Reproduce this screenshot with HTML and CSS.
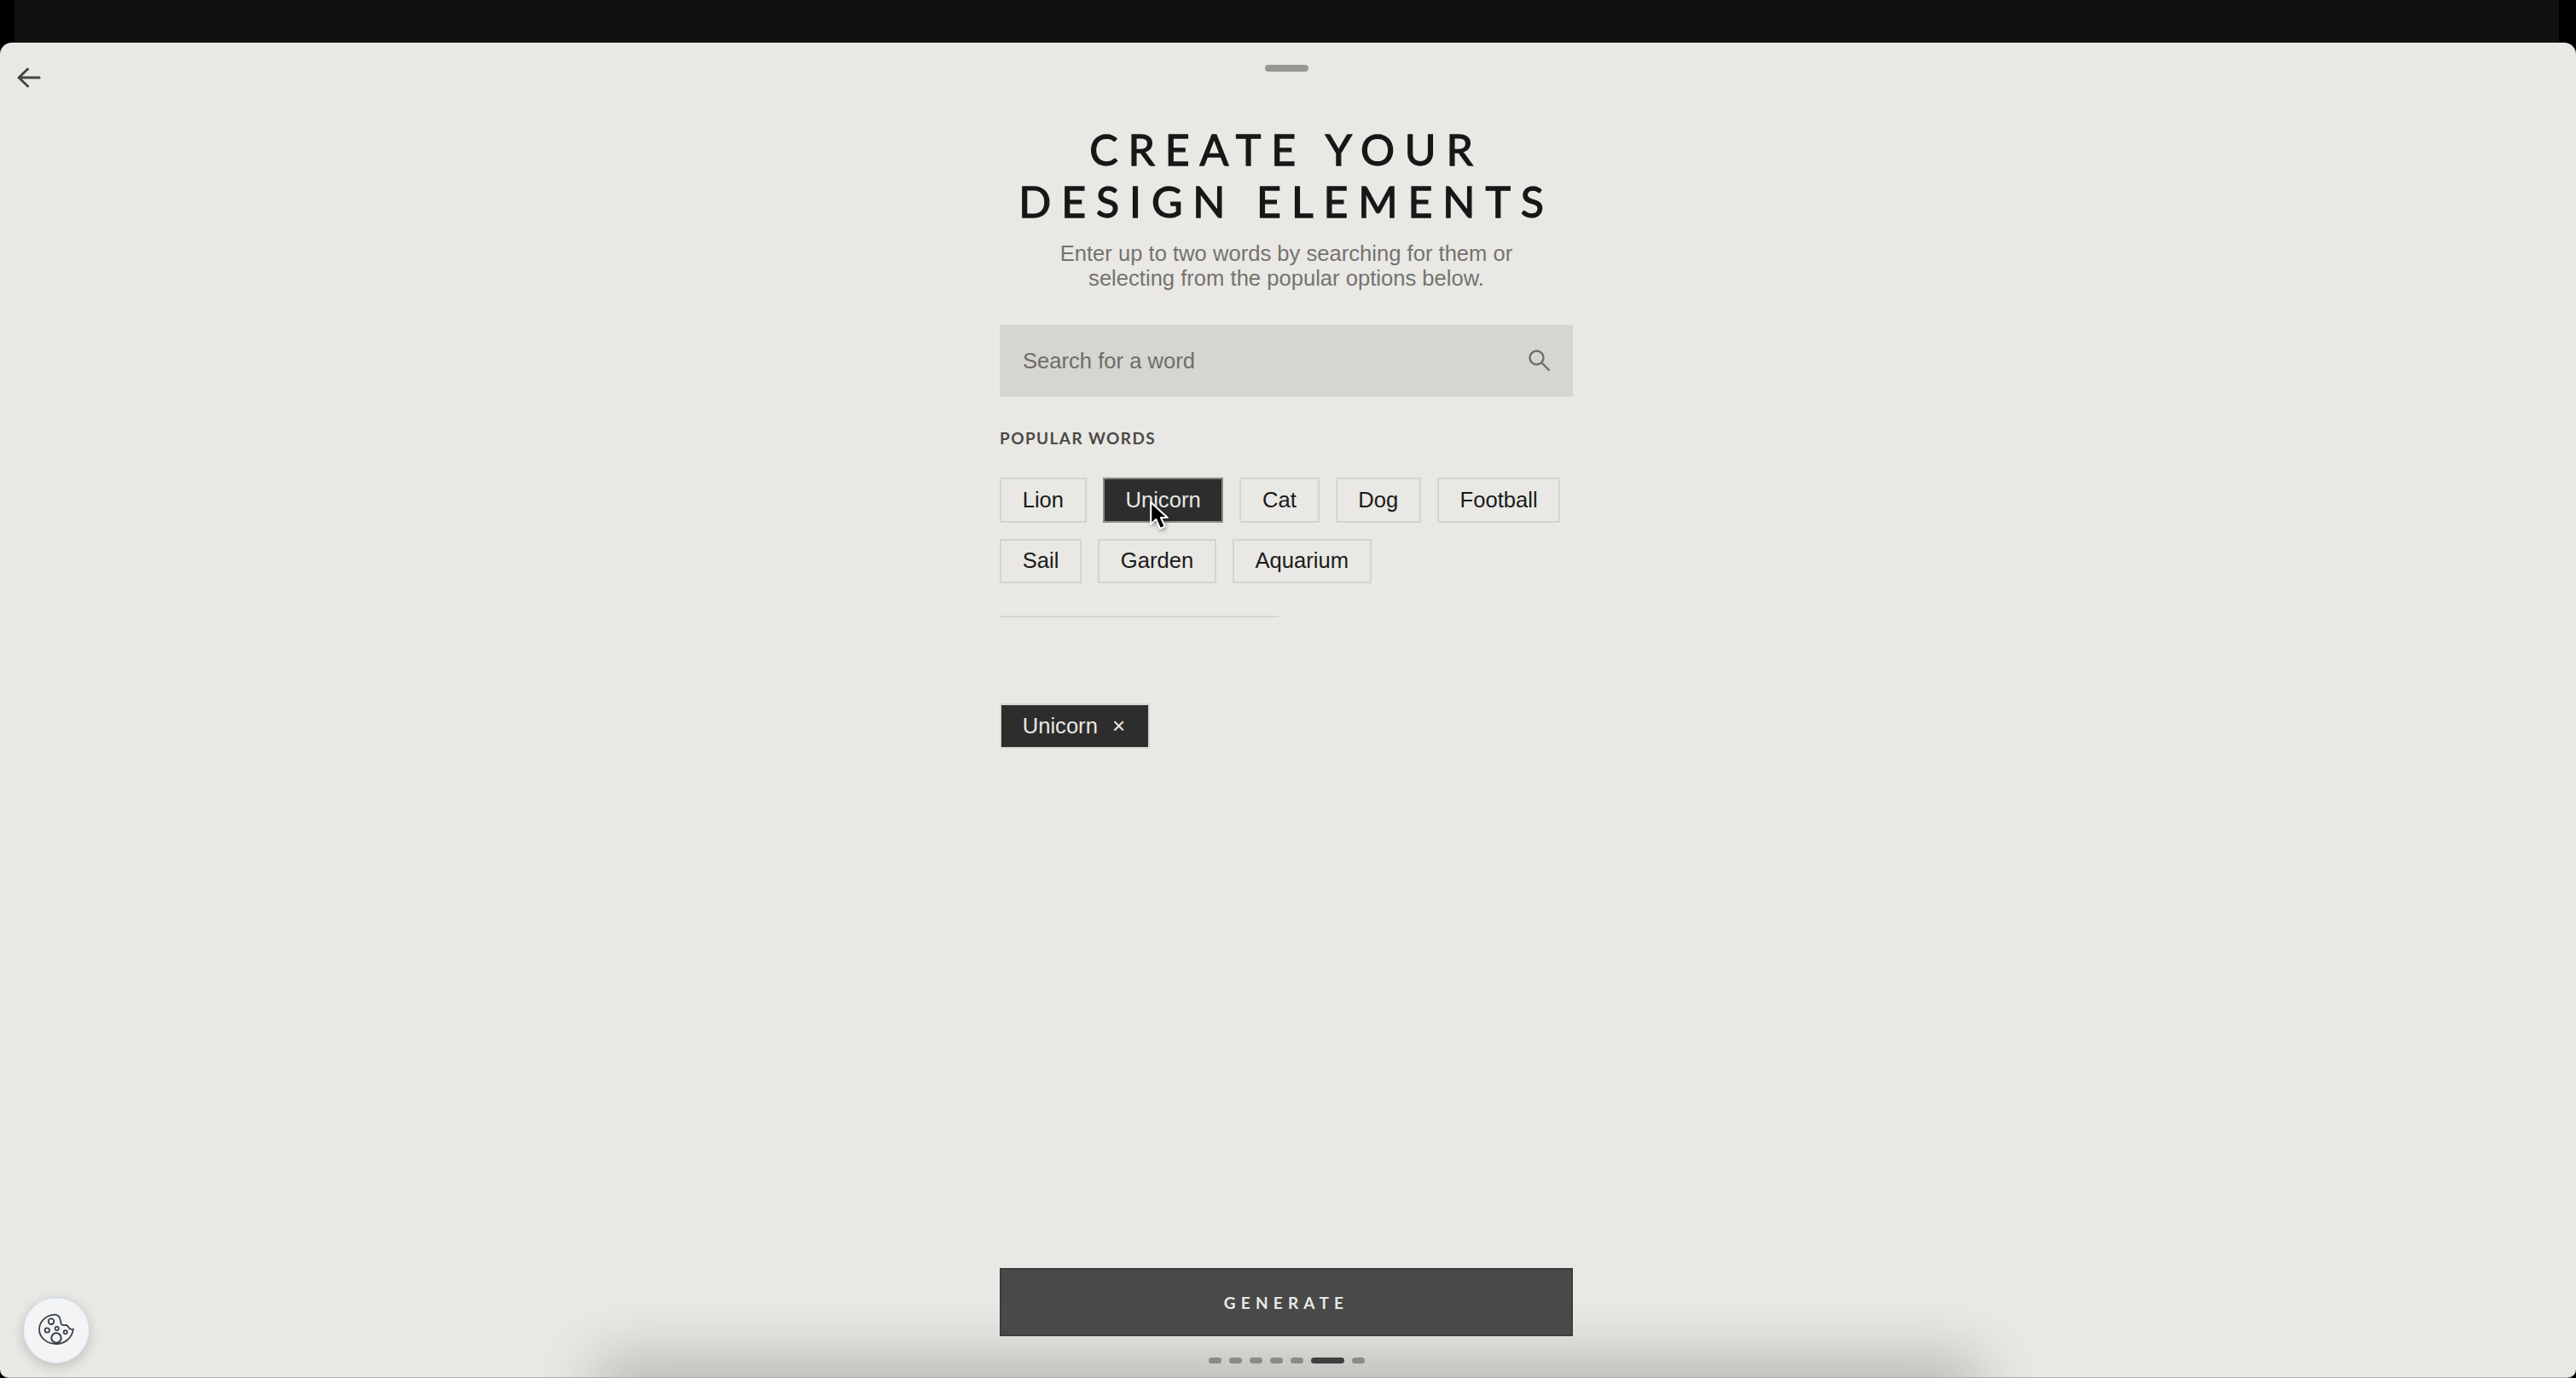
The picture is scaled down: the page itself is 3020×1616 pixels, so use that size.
FILE: index.html
```html
<!doctype html>
<html lang="en">
  <head>
    <meta charset="UTF-8" />
    <meta name="viewport" content="width=device-width, initial-scale=1.0" />
    <title>Create your design elements</title>
    <link rel="stylesheet" href="styles.css">
  </head>
  <body>
    <div class="backdrop">
      <div class="topbar"></div>
      <div class="sheet">
        <button class="back" aria-label="Back">
          <svg width="30" height="24" viewBox="0 0 30 24" fill="none" stroke="#444" stroke-width="3" stroke-linecap="round" stroke-linejoin="round">
            <path d="M2 12h24M12.500 2L2 12l10.500 10" />
          </svg>
        </button>
        <div class="handle"></div>

        <main class="panel">
          <h1>Create your<br />design elements</h1>
          <p class="intro">
            Enter up to two words by searching for them or<br />
            selecting from the popular options below.
          </p>

          <div class="search">
            <span>Search for a word</span>
            <svg width="26" height="26" viewBox="0 0 26 26" fill="none" stroke="#6e6d69" stroke-width="2.400">
              <circle cx="9.500" cy="9.500" r="8" />
              <path d="M15.500 15.500L24.500 24.500" />
            </svg>
          </div>

          <h2>Popular words</h2>
          <div class="chips">
            <button class="chip">Lion</button>
            <button class="chip active">Unicorn</button>
            <button class="chip">Cat</button>
            <button class="chip">Dog</button>
            <button class="chip">Football</button>
            <button class="chip">Sail</button>
            <button class="chip">Garden</button>
            <button class="chip">Aquarium</button>
          </div>
          <hr class="divider" />

          <div class="selected">
            <span class="chip active picked">Unicorn <span class="remove">×</span></span>
          </div>

          <button class="generate">Generate</button>
          <div class="steps">
            <span></span><span></span><span></span><span></span><span></span>
            <span class="current"></span><span></span>
          </div>
        </main>

        <div class="floor-shadow"></div>

        <button class="cookie" aria-label="Cookie settings">
          <svg width="42" height="42" viewBox="0 0 42 42" fill="none" stroke="#3c3f42" stroke-width="1.800">
            <path d="M19.500 2.700C9.500 3 1 10.500 1 20c0 9.500 9 17 20 17 10 0 18.500-7 19.800-17-2.500 0-4.300-.6-4.800-1.700-1.200-2-2-3-3.300-3.300-3.400.3-5.500-.5-6-1.700-.6-2.500-1-6-2.400-8.300-1.200-1.200-2.800-2-4.800-2.300z" />
            <circle cx="15" cy="10.700" r="3.300" />
            <circle cx="10.300" cy="21" r="2.700" />
            <circle cx="21.700" cy="19" r="2.100" />
            <circle cx="31.700" cy="23.300" r="2.100" />
            <circle cx="21" cy="30" r="5.700" stroke-width="2" />
          </svg>
        </button>

        <svg class="cursor" width="25" height="37" viewBox="0 0 24 36">
          <path d="M2 2v25l6-5.500 4.500 10.500 5.500-2.500-4.500-10H21z" fill="#000" stroke="#fff" stroke-width="2" stroke-linejoin="round" />
        </svg>
      </div>
    </div>
  </body>
</html>
```

FILE: styles.css
```css
* {
  box-sizing: border-box;
}
html,
body {
  margin: 0;
  height: 100%;
}
body {
  background-color: #000;
  font-family: "Liberation Sans", Arial, sans-serif;
  overflow: hidden;
}
.backdrop {
  height: 100vh;
  display: flex;
  flex-direction: column;
}
.topbar {
  height: 50px;
  margin: 0 20px 0 17px;
  background-color: #111;
  flex: none;
}
.sheet {
  position: relative;
  flex: 1;
  padding-right: 4px;
  background-color: #e9e8e4;
  border-radius: 14px 14px 10px 10px;
  border-bottom: 1px solid #aeada9;
  overflow: hidden;
  display: flex;
  flex-direction: column;
  align-items: center;
}
.back {
  position: absolute;
  left: 20px;
  top: 29px;
  padding: 0;
  border: none;
  background: none;
  line-height: 0;
}
.handle {
  width: 51px;
  height: 8px;
  margin-top: 26px;
  border-radius: 4px;
  background-color: #979795;
  flex: none;
}

/* column with all the form content */
.panel {
  width: 672px;
  flex: 1;
  display: flex;
  flex-direction: column;
  position: relative;
  z-index: 1;
}
h1 {
  margin: 61px 0 0;
  font-family: Lato, sans-serif;
  font-size: 50px;
  font-weight: 400;
  line-height: 61px;
  letter-spacing: 11.9px;
  text-align: center;
  text-transform: uppercase;
  color: #171717;
  -webkit-text-stroke: 1.3px #171717;
}
.intro {
  margin: 16px 0 0;
  font-size: 25.6px;
  line-height: 29px;
  text-align: center;
  color: #74736f;
}
.search {
  height: 84px;
  margin-top: 40px;
  padding: 0 26px 0 27px;
  display: flex;
  align-items: center;
  justify-content: space-between;
  background-color: #d6d5d0;
  font-size: 25.6px;
  color: #6e6d69;
}
h2 {
  margin: 37px 0 0;
  font-family: Lato, sans-serif;
  font-size: 19px;
  font-weight: 700;
  line-height: 23px;
  letter-spacing: 1.4px;
  text-transform: uppercase;
  color: #4a4a48;
}
.chips {
  margin-top: 35px;
  display: flex;
  flex-wrap: wrap;
  gap: 19px;
}
.chip {
  height: 52.5px;
  padding: 0 24.7px;
  border: 2px solid #d4d3ce;
  border-radius: 0;
  background: none;
  font-family: inherit;
  font-size: 25.6px;
  color: #1a1a1a;
}
.chip.active {
  border-color: #8b8b88;
  background-color: #2d2d2d;
  color: #e9e8e4;
}
.divider {
  width: 327px;
  height: 2px;
  margin: 38px 0 0;
  border: none;
  background-color: #d6d5d0;
}
.selected {
  margin-top: 101px;
  display: flex;
}
.chip.picked {
  padding-right: 27px;
  display: flex;
  align-items: center;
  gap: 17px;
  border-color: #d6d5d0;
}
.remove {
  font-size: 26px;
  line-height: 1;
}
.generate {
  height: 80px;
  margin-top: auto;
  border: 2px solid #3e3e3e;
  background-color: #494949;
  font-family: Lato, sans-serif;
  font-size: 19px;
  font-weight: 700;
  letter-spacing: 6.2px;
  text-transform: uppercase;
  color: #e9e8e4;
  flex: none;
}
.steps {
  height: 48px;
  padding-top: 25px;
  display: flex;
  justify-content: center;
  gap: 9px;
  flex: none;
}
.steps span {
  width: 15px;
  height: 7px;
  border-radius: 4px;
  background-color: #8a8a88;
}
.steps .current {
  width: 39px;
  background-color: #3f3f3f;
}

/* blurred shadow coming up from under the sheet */
.floor-shadow {
  position: absolute;
  left: 720px;
  right: 720px;
  bottom: -30px;
  height: 30px;
  box-shadow: 0 0 70px 20px rgba(0, 0, 0, 0.24);
}
.cookie {
  position: absolute;
  left: 27px;
  bottom: 16px;
  width: 78px;
  height: 78px;
  padding: 0;
  display: flex;
  align-items: center;
  justify-content: center;
  border: 1px solid #cfdbe8;
  border-radius: 50%;
  background-color: #f2f4f6;
  box-shadow: 0 4px 14px rgba(0, 0, 0, 0.18);
}
.cursor {
  position: absolute;
  left: 1347px;
  top: 537px;
  z-index: 2;
  filter: drop-shadow(1px 2px 2px rgba(0, 0, 0, 0.35));
}
```
